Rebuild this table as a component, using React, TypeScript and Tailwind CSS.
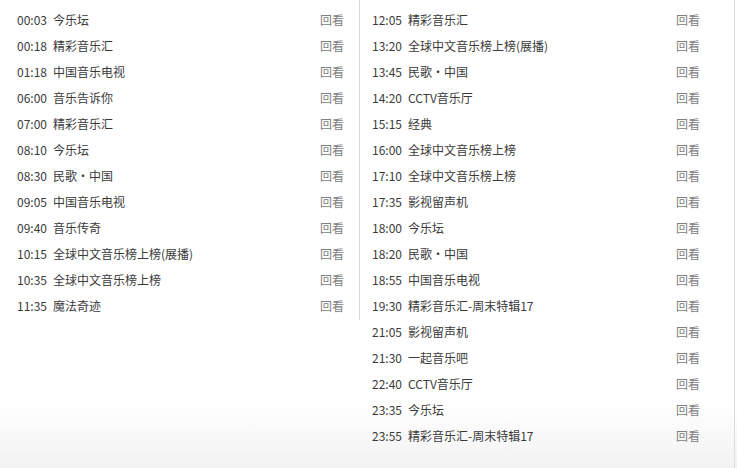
import React from "react";

type Item = { time: string; title: string };

const left: Item[] = [
  { time: "00:03", title: "今乐坛" },
  { time: "00:18", title: "精彩音乐汇" },
  { time: "01:18", title: "中国音乐电视" },
  { time: "06:00", title: "音乐告诉你" },
  { time: "07:00", title: "精彩音乐汇" },
  { time: "08:10", title: "今乐坛" },
  { time: "08:30", title: "民歌·中国" },
  { time: "09:05", title: "中国音乐电视" },
  { time: "09:40", title: "音乐传奇" },
  { time: "10:15", title: "全球中文音乐榜上榜(展播)" },
  { time: "10:35", title: "全球中文音乐榜上榜" },
  { time: "11:35", title: "魔法奇迹" },
];

const right: Item[] = [
  { time: "12:05", title: "精彩音乐汇" },
  { time: "13:20", title: "全球中文音乐榜上榜(展播)" },
  { time: "13:45", title: "民歌·中国" },
  { time: "14:20", title: "CCTV音乐厅" },
  { time: "15:15", title: "经典" },
  { time: "16:00", title: "全球中文音乐榜上榜" },
  { time: "17:10", title: "全球中文音乐榜上榜" },
  { time: "17:35", title: "影视留声机" },
  { time: "18:00", title: "今乐坛" },
  { time: "18:20", title: "民歌·中国" },
  { time: "18:55", title: "中国音乐电视" },
  { time: "19:30", title: "精彩音乐汇-周末特辑17" },
  { time: "21:05", title: "影视留声机" },
  { time: "21:30", title: "一起音乐吧" },
  { time: "22:40", title: "CCTV音乐厅" },
  { time: "23:35", title: "今乐坛" },
  { time: "23:55", title: "精彩音乐汇-周末特辑17" },
];

const Row = ({ item }: { item: Item }) => (
  <li className="flex items-center h-[26px] leading-[26px]">
    <span className="w-[36px] tabular-nums">{item.time}</span>
    <span className="flex-1 truncate">{item.title}</span>
    <a href="#" className="text-[#808080]">
      回看
    </a>
  </li>
);

export default function App() {
  return (
    <div
      className="w-[737px] h-[468px] flex items-start bg-[linear-gradient(to_bottom,#ffffff_86%,#f2f2f2)] text-[12px] text-[#3a3a3a]"
      style={{ fontFamily: '"Noto Sans CJK SC", "Noto Sans", sans-serif' }}
    >
      {/* 上午 */}
      <ul className="w-[360px] border-r border-[#dcdcdc] pt-[7px] pb-[1px] pl-[17px] pr-[15px]">
        {left.map((it) => (
          <Row key={it.time} item={it} />
        ))}
      </ul>
      {/* 下午 */}
      <ul className="w-[375px] h-full border-r border-[#dcdcdc] pt-[7px] pl-[12px] pr-[34px]">
        {right.map((it) => (
          <Row key={it.time} item={it} />
        ))}
      </ul>
    </div>
  );
}
